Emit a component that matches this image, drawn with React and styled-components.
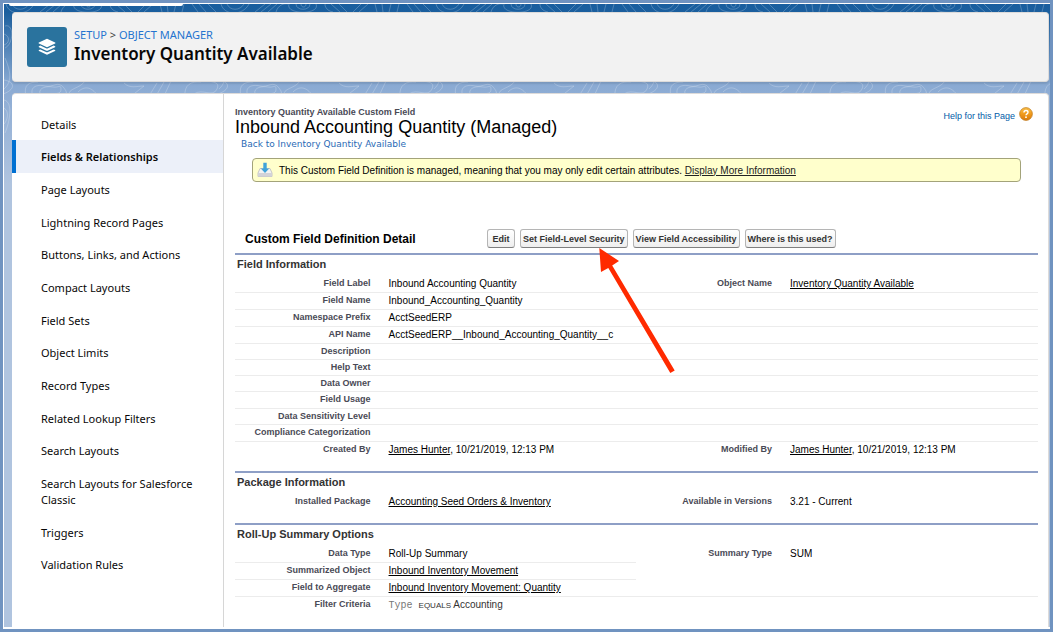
import React from "react";
import styled, { createGlobalStyle } from "styled-components";

const sans = `"Liberation Sans", Arial, Helvetica, sans-serif`;
const brandSans = `"Noto Sans", "Open Sans", sans-serif`;

const GlobalStyle = createGlobalStyle`
  *, *::before, *::after { box-sizing: border-box; }
  body { margin: 0; font-family: ${sans}; font-size: 10px; color: #000; }
`;

const Frame = styled.div`
  min-height: 100vh;
  display: flex;
  flex-direction: column;
  border: 3px solid #7093c0;
  background: #fff;
  padding: 1px 0 2px 1px;
`;

const Backdrop = styled.div`
  position: relative;
  flex: 1;
  display: flex;
  flex-direction: column;
  padding: 8px 1px 0 8px;
  background: linear-gradient(#195e9f 0, #1b5f9e 8px, #8aaad3 80px, #b0c4df 180px);
`;

const Contours = styled.svg`
  position: absolute;
  inset: 0;
  width: 100%;
  height: 150px;
`;

const TabEdge = styled.div`
  position: absolute;
  top: 0;
  left: 5px;
  width: 174px;
  height: 2px;
  background: #fff;
  border-radius: 0 0 4px 4px;
`;

const PageHeader = styled.header`
  position: relative;
  display: flex;
  align-items: center;
  gap: 7px;
  height: 70px;
  padding: 0 15px;
  background: #f2f2f2;
  border: 1px solid #dddbda;
  border-left: 0;
  border-radius: 4px;
  box-shadow: 0 2px 2px rgba(0, 0, 0, 0.1);
  font-family: ${brandSans};
`;

const ObjectBadge = styled.div`
  display: flex;
  align-items: center;
  justify-content: center;
  width: 40px;
  height: 40px;
  border-radius: 3px;
  background: #2a739e;
`;

const HeaderText = styled.div`
  padding-bottom: 2px;
`;

const Crumbs = styled.nav`
  font-size: 11px;
  line-height: 16px;
  color: #444;
  a { color: #2574cf; text-decoration: none; }
`;

const PageTitle = styled.h1`
  margin: 0;
  font-size: 17px;
  line-height: 22px;
  font-weight: 600;
  color: #080707;
`;

const Card = styled.div`
  position: relative;
  flex: 1;
  display: flex;
  margin-top: 11px;
  background: #fff;
  border-top: 1px solid #dddbda;
  border-right: 1px solid #dddbda;
  border-radius: 4px 4px 0 0;
`;

const Sidebar = styled.nav`
  flex: 0 0 212px;
  border-right: 1px solid #d6d6d6;
  padding-top: 14px;
  font-family: ${brandSans};
`;

const NavList = styled.ul`
  list-style: none;
  margin: 0;
  padding: 0;
`;

const NavItem = styled.li`
  padding: 9px 20px 8px 25px;
  border-left: 4px solid ${(p) => (p.$active ? "#0070d2" : "transparent")};
  background: ${(p) => (p.$active ? "#ecf0f9" : "transparent")};
  background-clip: padding-box;
  font-size: 11px;
  line-height: 16px;
  font-weight: ${(p) => (p.$active ? 600 : 400)};
  &:nth-child(3n + 1) { padding-bottom: 7px; }
  a { color: #080707; text-decoration: none; }
`;

const Content = styled.main`
  flex: 1;
  min-width: 0;
  padding: 12px 10px 8px 11px;
`;

const ContentHead = styled.div`
  display: flex;
  justify-content: space-between;
  align-items: flex-start;
`;

const RecordKind = styled.p`
  margin: 0;
  font-size: 9px;
  line-height: 12px;
  font-weight: 700;
  color: #4a4a56;
`;

const RecordTitle = styled.h2`
  margin: 0;
  font-size: 18px;
  line-height: 18px;
  font-weight: 400;
`;

const BackLink = styled.a`
  display: block;
  margin-left: 6px;
  font-family: "DejaVu Sans", Verdana, sans-serif;
  font-size: 9px;
  line-height: 16px;
  color: #2a6ab5;
  text-decoration: none;
`;

const HelpLink = styled.a`
  display: flex;
  align-items: flex-start;
  gap: 4px;
  padding: 1px 5px 0 0;
  font-size: 9px;
  line-height: 18px;
  color: #015ba7;
  text-decoration: none;
`;

const Notice = styled.div`
  display: flex;
  align-items: center;
  gap: 6px;
  height: 24px;
  margin: 6px 17px 0 17px;
  padding: 0 4px;
  border: 1px solid #a3a37a;
  border-radius: 4px;
  background: #ffffcc;
  font-size: 10px;
  a { color: #222; }
`;

const ActionBar = styled.div`
  display: flex;
  align-items: center;
  margin-top: 47px;
  padding: 0 0 5px 10px;
`;

const DetailHeading = styled.h3`
  flex: 0 0 242px;
  margin: 0;
  font-size: 12px;
  line-height: 18px;
  font-weight: 700;
`;

const Actions = styled.div`
  display: flex;
  gap: 5px;
`;

const ActionSlot = styled.div`
  position: relative;
`;

const Button = styled.button`
  min-width: 28px;
  height: 19px;
  padding: 0 2px;
  border: 1px solid #b5b5b5;
  border-bottom-color: #7f7f7f;
  border-radius: 3px;
  background: linear-gradient(#fff, #eeeeee);
  font: 700 9px/16px ${sans};
  color: #333;
  white-space: nowrap;
`;

const Arrow = styled.svg`
  position: absolute;
  top: 18px;
  left: 79px;
  z-index: 1;
  pointer-events: none;
`;

const Section = styled.section`
  border-top: 2px solid #8e9fc6;
  padding-bottom: ${(p) => (p.$last ? 0 : 12)}px;
`;

const SectionTitle = styled.h4`
  margin: 0;
  padding: 0 2px 3px;
  font-size: 11px;
  line-height: 18px;
  font-weight: 700;
  color: #333;
`;

const Table = styled.table`
  width: 100%;
  table-layout: fixed;
  border-collapse: separate;
  border-spacing: 0;
`;

const LabelCol = styled.col`
  width: 18%;
`;

const ValueCol = styled.col`
  width: 32%;
`;

const Row = styled.tr`
  height: ${(p) => (p.$compact ? 16 : 17)}px;
`;

const Label = styled.th`
  padding: 0 9px 0 0;
  border-bottom: 1px solid ${(p) => (p.$line ? "#ececec" : "transparent")};
  font-size: 9px;
  line-height: 15px;
  font-weight: 700;
  text-align: right;
  vertical-align: top;
  color: #4a4a56;
  white-space: nowrap;
`;

const Value = styled.td`
  padding: 0 0 0 9px;
  border-bottom: 1px solid ${(p) => (p.$line ? "#ececec" : "transparent")};
  font-size: 10px;
  line-height: 15px;
  vertical-align: top;
  white-space: nowrap;
  a { color: #000; }
`;

const Criteria = styled.span`
  color: #333;
  code { font: 10px "Liberation Mono", monospace; color: #777; white-space: pre; }
  small { font-size: 8px; }
`;

const Link = ({ children }) => <a href="#">{children}</a>;

const navItems = [
  "Details", "Fields & Relationships", "Page Layouts", "Lightning Record Pages",
  "Buttons, Links, and Actions", "Compact Layouts", "Field Sets", "Object Limits",
  "Record Types", "Related Lookup Filters", "Search Layouts",
  "Search Layouts for Salesforce Classic", "Triggers", "Validation Rules",
];

const author = <><Link>James Hunter</Link>, 10/21/2019, 12:13 PM</>;

const fieldRows = [
  { cells: ["Field Label", "Inbound Accounting Quantity", "Object Name", <Link>Inventory Quantity Available</Link>] },
  { cells: ["Field Name", "Inbound_Accounting_Quantity"] },
  { cells: ["Namespace Prefix", "AcctSeedERP"] },
  { cells: ["API Name", "AcctSeedERP__Inbound_Accounting_Quantity__c"] },
  { cells: ["Description"], compact: true },
  { cells: ["Help Text"], compact: true },
  { cells: ["Data Owner"], compact: true },
  { cells: ["Field Usage"] },
  { cells: ["Data Sensitivity Level"], compact: true },
  { cells: ["Compliance Categorization"] },
  { cells: ["Created By", author, "Modified By", author], line: "none" },
];

const packageRows = [
  {
    cells: ["Installed Package", <Link>Accounting Seed Orders &amp; Inventory</Link>, "Available in Versions", "3.21 - Current"],
    line: "none",
  },
];

const rollupRows = [
  { cells: ["Data Type", "Roll-Up Summary", "Summary Type", "SUM"], line: "left" },
  { cells: ["Summarized Object", <Link>Inbound Inventory Movement</Link>], line: "left" },
  { cells: ["Field to Aggregate", <Link>Inbound Inventory Movement: Quantity</Link>] },
  {
    cells: ["Filter Criteria", <Criteria><code>{"Type "}</code><small>EQUALS</small> Accounting</Criteria>],
    line: "none",
  },
];

function DetailSection({ title, rows, last }) {
  return (
    <Section $last={last}>
      <SectionTitle>{title}</SectionTitle>
      <Table>
        <colgroup><LabelCol /><ValueCol /><LabelCol /><ValueCol /></colgroup>
        <tbody>
          {rows.map(({ cells: [l1, v1, l2, v2], line = "full", compact }) => {
            const left = line !== "none";
            const right = line === "full";
            return (
              <Row key={l1} $compact={compact}>
                <Label scope="row" $line={left}>{l1}</Label>
                <Value $line={left}>{v1}</Value>
                {l2 ? (
                  <>
                    <Label scope="row" $line={right}>{l2}</Label>
                    <Value $line={right}>{v2}</Value>
                  </>
                ) : (
                  <Value colSpan={2} $line={right} />
                )}
              </Row>
            );
          })}
        </tbody>
      </Table>
    </Section>
  );
}

function ContourLines() {
  return (
    <Contours aria-hidden="true">
      <defs>
        <pattern id="contours" width="215" height="150" patternUnits="userSpaceOnUse">
          <g fill="none" stroke="#fff" strokeOpacity="0.22" strokeWidth="1">
            <path d="M2 0c3 12 22 12 28 0M8 0c3 7 13 7 17 0M36 8L46 0M42 8L52 0M49 8L58 0M57 8c2-7 8-9 12-8" />
            <path d="M70 0c-4 11 32 11 27 0M77 0c0 7 14 7 14 0M82 0c0 4 5 4 5 0M106 0c0 4 3 7 8 8M112 0l9 8M120 0l8 8" />
            <path d="M134 8l8-8M140 8l9-8M158 8l-2-8M164 8l-1-8M170 8l2-8M178 8l2-8M188 0l6 8M195 0l7 8M204 0l8 8" />
            <path d="M0 76c12 2 11 10-1 14M22 92c-3-12 4-14 12-14M29 92c-4-9 4-12 12-10s13-6 19 2-1 4-4 9" />
            <path d="M36 90c-2-7 8-8 13-7s8-3 8 2-4 4-7 5M65 92c-2-8 11-7 16-15M74 88c6-6 13-6 20 4M120 79c6 6 13 3 20 3l-14 11" />
            <path d="M145 92l8-13M152 92l8-14M160 92l7-15M181 92c-1-11 6-15 16-14M190 90c8-6 19 4 23-5s-9-6-12-10" />
            <path d="M1 22c9-3 9 18 0 22M0 30c6 2 6 9 0 11M1 54c5 12 8 23-1 31M0 96c10 2 5 24 1 33M0 104c6 4 3 13 0 16" />
          </g>
        </pattern>
      </defs>
      <rect width="100%" height="100%" fill="url(#contours)" />
    </Contours>
  );
}

export default function App() {
  return (
    <Frame>
      <GlobalStyle />
      <Backdrop>
        <ContourLines />
        <TabEdge />
        <PageHeader>
          <ObjectBadge>
            <svg width="18" height="18" viewBox="0 0 18 18" fill="#fff" aria-hidden="true">
              <path d="M8.4.9q.6-.3 1.2 0l7.5 3.6q.9.5 0 1L9.6 9.1q-.6.3-1.2 0L.9 5.5q-.9-.5 0-1z" />
              <path d="M1 8.2l1.3-.6 5.7 2.7q1 .5 2 0l5.700-2.700 1.300.6q.8.5 0 1L9.600 12.700q-.6.3-1.200 0L1 9.200q-.8-.5 0-1z" />
              <path d="M1 12l1.300-.6 5.700 2.700q1 .5 2 0l5.700-2.700 1.300.6q.8.5 0 1L9.600 16.500q-.6.3-1.200 0L1 13q-.8-.5 0-1z" />
            </svg>
          </ObjectBadge>
          <HeaderText>
            <Crumbs aria-label="Breadcrumb">
              <Link>SETUP</Link> &gt; <Link>OBJECT MANAGER</Link>
            </Crumbs>
            <PageTitle>Inventory Quantity Available</PageTitle>
          </HeaderText>
        </PageHeader>
        <Card>
          <Sidebar aria-label="Object setup">
            <NavList>
              {navItems.map((item) => (
                <NavItem key={item} $active={item === "Fields & Relationships"}>
                  <Link>{item}</Link>
                </NavItem>
              ))}
            </NavList>
          </Sidebar>
          <Content>
            <ContentHead>
              <div>
                <RecordKind>Inventory Quantity Available Custom Field</RecordKind>
                <RecordTitle>Inbound Accounting Quantity (Managed)</RecordTitle>
                <BackLink href="#">Back to Inventory Quantity Available</BackLink>
              </div>
              <HelpLink href="#">
                Help for this Page
                <svg width="14" height="14" viewBox="0 0 14 14" aria-hidden="true">
                  <defs>
                    <linearGradient id="orb" x1="0" y1="0" x2="0" y2="1">
                      <stop offset="0" stopColor="#f9c04a" />
                      <stop offset="0.5" stopColor="#f09a1c" />
                      <stop offset="1" stopColor="#d97a0c" />
                    </linearGradient>
                  </defs>
                  <circle cx="7" cy="7" r="6.4" fill="url(#orb)" stroke="#bd7a20" strokeWidth="0.7" />
                  <path d="M5 5.500q0-2 2-2t2 1.700q0 1-1 1.600t-1 1.500" fill="none" stroke="#fff" strokeWidth="1.4" />
                  <circle cx="7" cy="10.2" r="0.9" fill="#fff" />
                </svg>
              </HelpLink>
            </ContentHead>
            <Notice>
              <svg width="16" height="16" viewBox="0 0 16 16" aria-hidden="true">
                <path d="M3 6.500h10l2 4.500v3.500H1V11z" fill="#f3f3f3" stroke="#b9b9c0" strokeWidth="0.8" />
                <path d="M1 11h14v3.500H1z" fill="#d3d3d8" />
                <path d="M6.300.8h3.400v5.700h2.500L8 11 3.800 6.500h2.500z" fill="#3fa3d9" />
              </svg>
              <span>
                This Custom Field Definition is managed, meaning that you may only edit certain attributes.{" "}
                <Link>Display More Information</Link>
              </span>
            </Notice>
            <ActionBar>
              <DetailHeading>Custom Field Definition Detail</DetailHeading>
              <Actions>
                <Button type="button">Edit</Button>
                <ActionSlot>
                  <Button type="button">Set Field-Level Security</Button>
                  <Arrow width="78" height="128" viewBox="0 0 78 128" fill="#ff2a00" aria-hidden="true">
                    <path d="M.3 1L20 14l-6.800 4.600L75.700 123.600l-4.400 2.500L9.300 21 2 25z" />
                  </Arrow>
                </ActionSlot>
                <Button type="button">View Field Accessibility</Button>
                <Button type="button">Where is this used?</Button>
              </Actions>
            </ActionBar>
            <DetailSection title="Field Information" rows={fieldRows} />
            <DetailSection title="Package Information" rows={packageRows} />
            <DetailSection title="Roll-Up Summary Options" rows={rollupRows} last />
          </Content>
        </Card>
      </Backdrop>
    </Frame>
  );
}
